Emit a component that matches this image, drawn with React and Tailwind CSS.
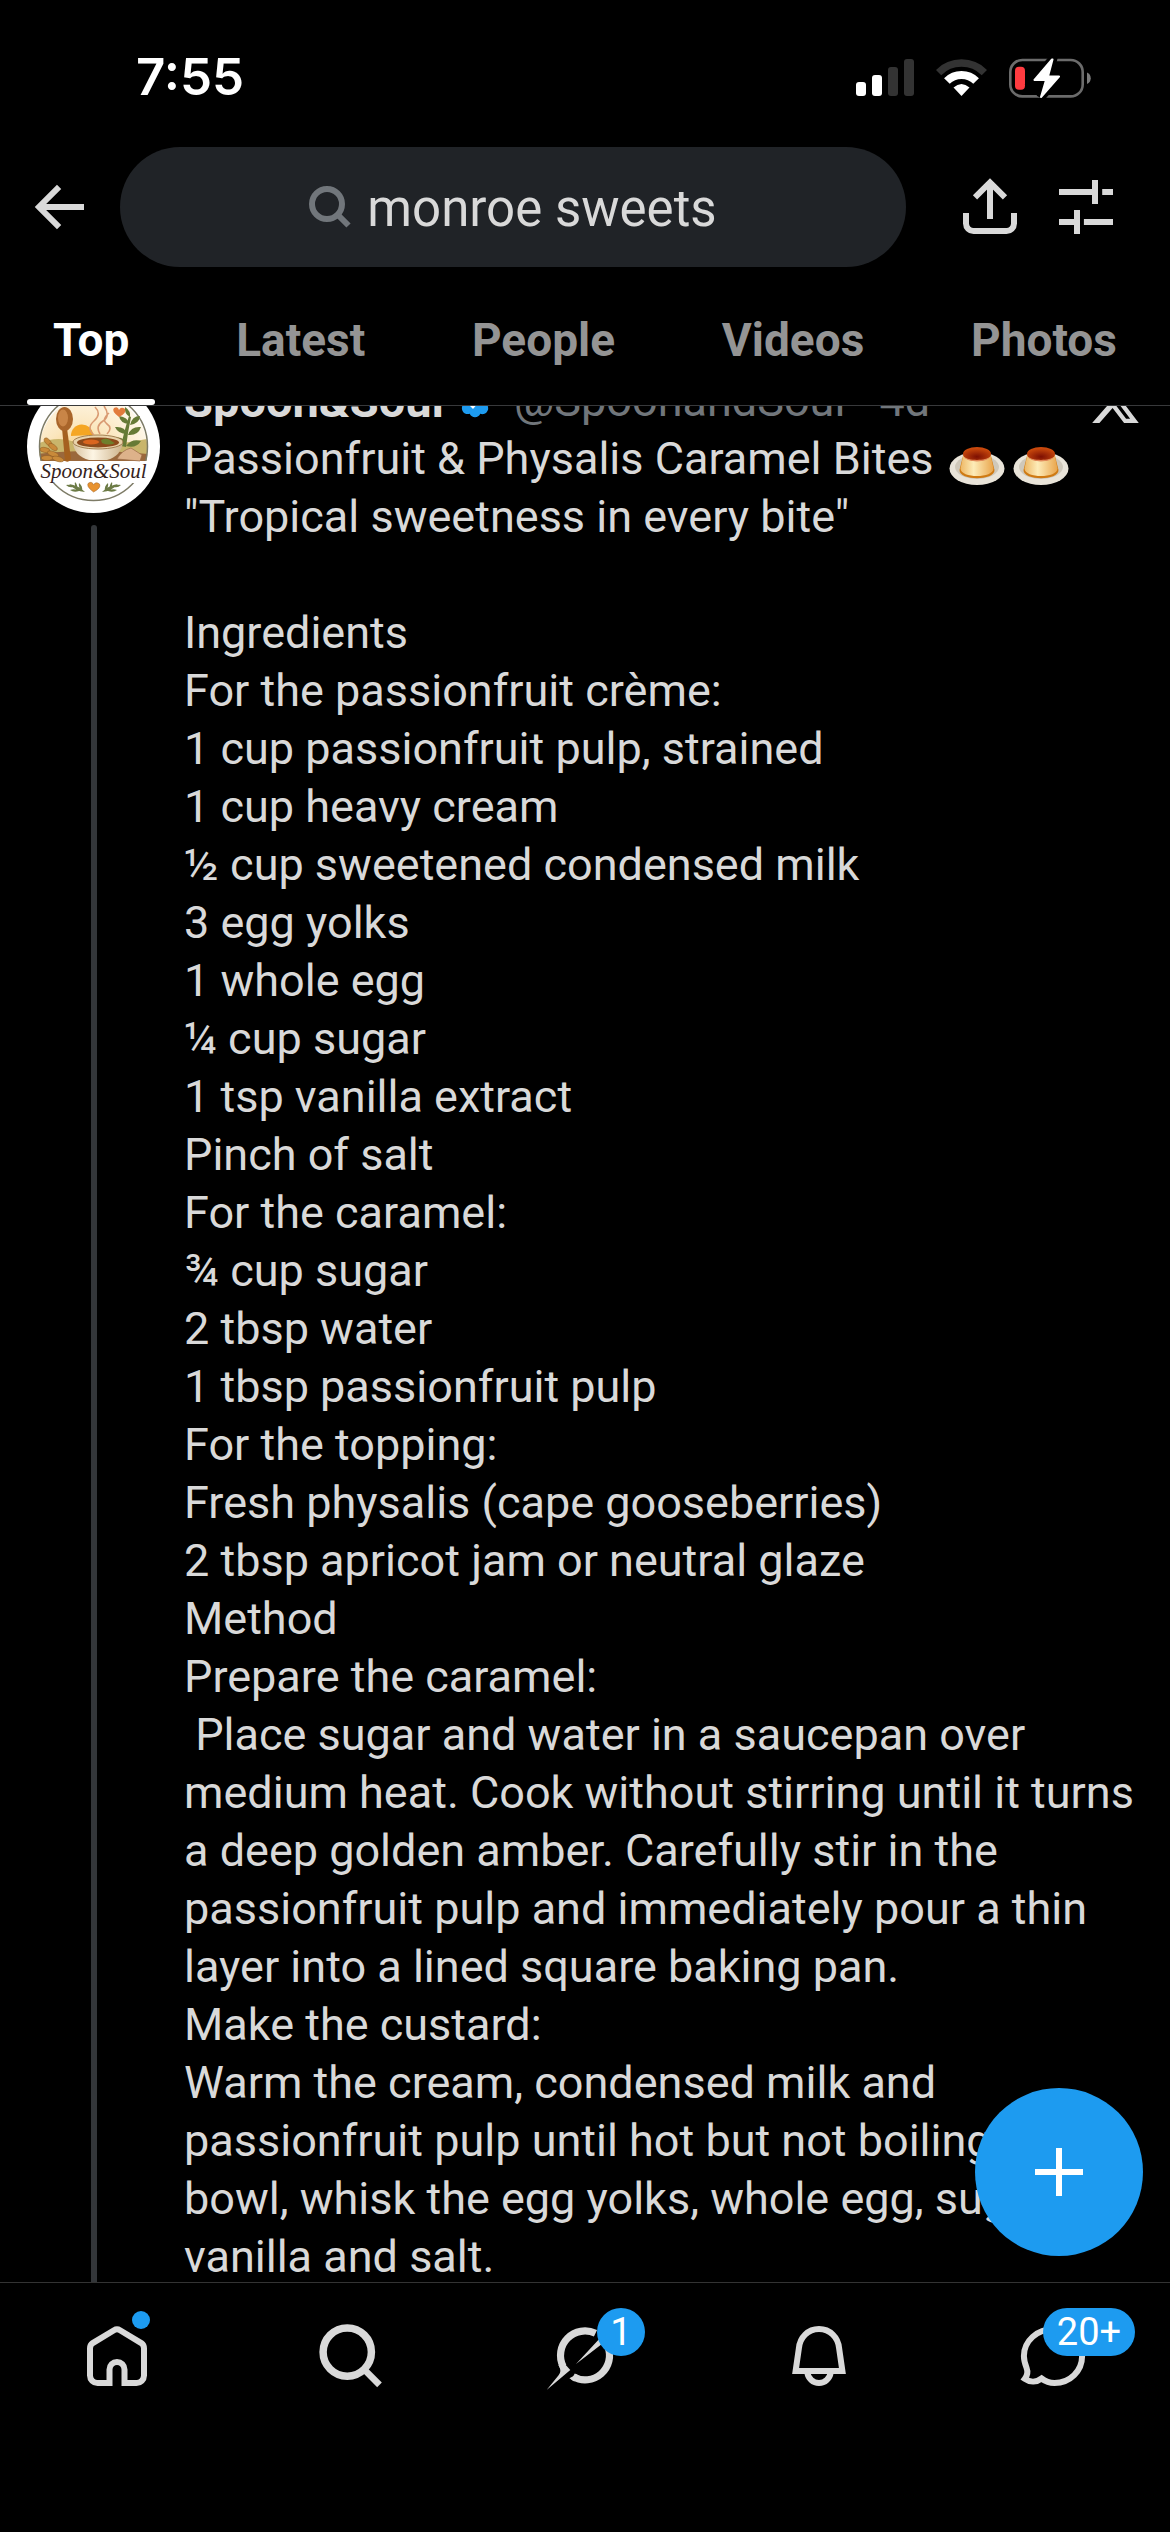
const TABS = ["Top", "Latest", "People", "Videos", "Photos"];

const POST_TEXT = `"Tropical sweetness in every bite"

Ingredients
For the passionfruit crème:
1 cup passionfruit pulp, strained
1 cup heavy cream
½ cup sweetened condensed milk
3 egg yolks
1 whole egg
¼ cup sugar
1 tsp vanilla extract
Pinch of salt
For the caramel:
¾ cup sugar
2 tbsp water
1 tbsp passionfruit pulp
For the topping:
Fresh physalis (cape gooseberries)
2 tbsp apricot jam or neutral glaze
Method
Prepare the caramel:
 Place sugar and water in a saucepan over medium heat. Cook without stirring until it turns a deep golden amber. Carefully stir in the passionfruit pulp and immediately pour a thin layer into a lined square baking pan.
Make the custard:
Warm the cream, condensed milk and passionfruit pulp until hot but not boiling. In a bowl, whisk the egg yolks, whole egg, sugar, vanilla and salt.`;

const Icon = ({ children, className = "size-[72px]" }) => (
  <svg
    viewBox="0 0 24 24"
    fill="none"
    stroke="currentColor"
    strokeWidth="2"
    overflow="visible"
    aria-hidden="true"
    className={className}
  >
    {children}
  </svg>
);

const BackIcon = () => (
  <Icon>
    <path d="M20 12H5M11.7 5.3L5 12l6.7 6.7" />
  </Icon>
);

const ShareIcon = () => (
  <Icon>
    <path d="M12 16V4M7 8.8l5-5 5 5M4 14v3.5A2.5 2.5 0 006.5 20h11a2.5 2.5 0 002.5-2.5V14" />
  </Icon>
);

const FilterIcon = () => (
  <Icon>
    <path d="M3 7h11M15 3v8M17.4 7H21M3 17h5M9 13v8M11.3 17H21" />
  </Icon>
);

const HomeIcon = () => (
  <Icon>
    <path d="M9.5 21v-4.5a2.5 2.5 0 015 0V21h4a2.5 2.5 0 002.5-2.5V9.5q0-1.2-.9-1.8L13 3.4q-1-.6-2 0L3.9 7.7Q3 8.3 3 9.5v9A2.5 2.5 0 005.5 21z" />
    <path d="M11.4 21h1.2" stroke="#000" strokeWidth="2.2" />
  </Icon>
);

const SearchIcon = () => (
  <Icon>
    <circle cx="10.75" cy="10.7" r="8.05" strokeWidth="2.5" />
    <path d="M16.4 16.5l5.1 5.1" strokeWidth="2.2" />
  </Icon>
);

const GrokIcon = () => (
  <Icon>
    <path d="M15.5 4.45A8.15 8.15 0 004.7 15.45" strokeWidth="2.4" />
    <path d="M8 18.9A8.15 8.15 0 0019.6 8.8" strokeWidth="2.4" />
    <path
      d="M3.1 15c.9 1.5.9 2.4.1 3.4L-.8 23.3l7.9-6.6-1.8-2zM6.8 19.4l2.6-1.4-1 2.5zM9 14.7l8.5-9.2 1 1.8z"
      fill="currentColor"
      stroke="none"
    />
  </Icon>
);

const BellIcon = () => (
  <Icon>
    <path d="M12 3C8.3 3 5.6 5.8 5.3 9.4L4.2 17h15.6l-1.1-7.6C18.4 5.8 15.7 3 12 3z" />
    <path d="M8.1 17.5c.3 2 1.9 3.5 3.9 3.5s3.6-1.5 3.9-3.5" />
  </Icon>
);

const ChatIcon = () => (
  <Icon>
    <path d="M12.3 3C6.7 3 2.3 7 2.3 12c0 1.6.5 2.9.9 4 .6 1.6.2 2.6-.6 3.6 1.8 1.3 4 1.1 5.6-.1 1.3 1 2.7 1.5 4.3 1.5 5.2 0 9.2-4 9.2-9s-4-9-9.4-9z" />
  </Icon>
);

const NAV_ITEMS = [
  { label: "Home", icon: HomeIcon, dot: true },
  { label: "Search", icon: SearchIcon },
  { label: "Grok", icon: GrokIcon, badge: "1", badgeClass: "left-12 w-12" },
  { label: "Notifications", icon: BellIcon },
  { label: "Messages", icon: ChatIcon, badge: "20+", badgeClass: "left-[26px] w-[92px]" },
];

const StatusBar = () => (
  <div className="flex h-[147px] items-center pl-[136px] pr-[79px] pt-2 text-white">
    <time className="font-['Inter',sans-serif] text-[51px] font-semibold">7:55</time>
    <div className="ml-auto flex items-center gap-[22px]">
      <svg viewBox="0 0 58 37" fill="#fff" className="h-[37px] w-[58px]" aria-hidden="true">
        <rect x="0" y="23" width="10" height="14" rx="3" />
        <rect x="16" y="16" width="10" height="21" rx="3" />
        <rect x="32" y="8" width="10" height="29" rx="3" fill="#333" />
        <rect x="48" y="0" width="10" height="37" rx="3" fill="#333" />
      </svg>
      <svg viewBox="0 0 51 37" fill="none" className="h-[37px] w-[51px]" aria-hidden="true">
        <path d="M2.6 13.6a32.4 32.4 0 0145.8 0" stroke="#333" strokeWidth="7.5" />
        <path d="M10.9 22a20.6 20.6 0 0129.2 0" stroke="#fff" strokeWidth="8" />
        <path d="M17.5 28.6q8-7 16 0L25.5 37z" fill="#fff" />
      </svg>
      <svg viewBox="0 0 82 40" fill="none" className="h-10 w-[82px]" aria-hidden="true">
        <rect x="1.3" y="2" width="72.4" height="36.4" rx="12" stroke="#6b6b6b" strokeWidth="2.6" />
        <path d="M78 14.5c5 2 5 9.5 0 11.5z" fill="#7b7b7b" />
        <rect x="6" y="8.7" width="10" height="23" rx="4" fill="#ff3b40" />
        <path d="M43 2L25.5 22H37l-5 17L50 18.5H39.5L43.5 2z" stroke="#000" strokeWidth="9" />
        <path
          d="M43 1.5L25.5 22H37l-5 17L50 18.5H39L43.5 1.5z"
          fill="#fff"
          stroke="#fff"
          strokeWidth="2"
          strokeLinejoin="round"
        />
      </svg>
    </div>
  </div>
);

const SearchHeader = () => (
  <div className="flex items-center pl-6 pr-12">
    <button type="button" aria-label="Back">
      <BackIcon />
    </button>
    <label className="ml-6 mr-12 flex h-[120px] min-w-0 flex-1 items-center justify-center gap-4 rounded-full bg-[#202327]">
      <svg
        viewBox="0 0 42 42"
        fill="none"
        stroke="#71767b"
        strokeWidth="6"
        className="size-[42px]"
        aria-hidden="true"
      >
        <circle cx="18" cy="18" r="15" />
        <path d="M28.5 28.5L39.5 39.5" />
      </svg>
      <input
        type="text"
        aria-label="Search"
        defaultValue="monroe sweets"
        className="field-sizing-content min-w-0 bg-transparent pt-1 text-[51px] outline-none"
      />
    </label>
    <div className="flex gap-6">
      <button type="button" aria-label="Share">
        <ShareIcon />
      </button>
      <button type="button" aria-label="Filters">
        <FilterIcon />
      </button>
    </div>
  </div>
);

const Tabs = () => (
  <nav className="flex h-[139px] justify-between border-b border-[#38393b] px-[27px]">
    {TABS.map((tab) => (
      <a
        key={tab}
        href={`#${tab.toLowerCase()}`}
        className={
          tab === "Top"
            ? "relative flex items-center px-[26px] pt-2 text-[46px] font-bold text-white"
            : "flex items-center px-[26px] pt-2 text-[46px] font-bold text-[#949494]"
        }
      >
        {tab}
        {tab === "Top" && (
          <span className="absolute inset-x-0 bottom-0 h-1.5 rounded-full bg-white" />
        )}
      </a>
    ))}
  </nav>
);

const Avatar = () => (
  <svg viewBox="0 0 133 133" className="size-[133px] shrink-0" role="img" aria-label="Spoon&Soul">
    <defs>
      <clipPath id="scene">
        <path d="M14 82a54 54 0 1 1 105 0z" />
      </clipPath>
      <radialGradient id="sun" cx="0.4" cy="0.65" r="0.6">
        <stop offset="0" stopColor="#f8c15c" />
        <stop offset="0.5" stopColor="#fbe6bd" />
        <stop offset="1" stopColor="#fffaf0" />
      </radialGradient>
      <linearGradient id="bowl" x1="0" x2="1">
        <stop offset="0" stopColor="#d9c3a0" />
        <stop offset="0.4" stopColor="#fdf5e4" />
        <stop offset="1" stopColor="#cdb28a" />
      </linearGradient>
    </defs>
    <circle cx="66.5" cy="66.5" r="66.5" fill="#fff" />
    <g clipPath="url(#scene)">
      <rect width="133" height="133" fill="url(#sun)" />
      <path d="M10 64q20-9 38-2t72-3v24H10z" fill="#c9b56b" />
      <path d="M10 74q50-6 112 0v10H10z" fill="#9a683c" />
      <path d="M44 56a11 11 0 0122-1z" fill="#f5a623" />
    </g>
    <circle cx="66.5" cy="66.5" r="54" fill="none" stroke="#7d7b66" strokeWidth="1.5" />
    <path d="M11 81h111l-3 22H14z" fill="#fff" />
    {/* wheat */}
    <g fill="#c98a3a" stroke="#8d5a20" strokeWidth="0.5">
      <ellipse cx="21" cy="62" rx="5" ry="2.5" transform="rotate(50 21 62)" />
      <ellipse cx="26" cy="67" rx="5" ry="2.5" transform="rotate(35 26 67)" />
      <ellipse cx="18" cy="70" rx="5" ry="2.5" transform="rotate(10 18 70)" />
      <ellipse cx="26" cy="74" rx="6" ry="2.5" transform="rotate(20 26 74)" />
      <ellipse cx="20" cy="78" rx="6" ry="2.5" />
      <ellipse cx="31" cy="79" rx="6" ry="2.5" transform="rotate(15 31 79)" />
    </g>
    {/* wooden spoon */}
    <path d="M35 48h5l4 31q-2 4-6 2z" fill="#a5611f" />
    <ellipse cx="37.5" cy="39" rx="8.5" ry="12" fill="#a9652a" />
    <ellipse cx="36" cy="38" rx="5" ry="8.5" fill="#c98547" />
    {/* herbs */}
    <g fill="#667a35">
      <path d="M94 66q4-18 8-30l2 1q-3 14-5 30z" />
      <path d="M103 37q-6-3-5-10 6 4 5 10zM102 44q-9-1-10-8 9 1 10 8zM103 45q2-9 10-9-1 8-10 9zM100 54q-9 0-12-7 10-1 12 7zM101 55q3-9 13-8-3 9-13 8zM98 64q-7 0-10-6 9-2 10 6zM99 66q6-8 15-5-5 8-15 5z" />
    </g>
    {/* soup bowl */}
    <path d="M46 62c0 9 7 16 16 18h18c9-2 15-9 16-18z" fill="url(#bowl)" />
    <ellipse cx="71" cy="62" rx="25" ry="7" fill="#e9d3ab" stroke="#8f6838" strokeWidth="0.8" />
    <ellipse cx="71" cy="62.5" rx="21" ry="5" fill="#8d4a1b" />
    <ellipse cx="64" cy="62" rx="8" ry="2.5" fill="#d9651f" />
    <path d="M74 60q5-3 9 0t5 3q-6 3-13 0z" fill="#6f7f2c" />
    <path
      d="M67 55q-8-7 0-14t1-14M73 54q-5-8 3-13t1-15M80 54q6-6 0-10t2-11"
      fill="none"
      stroke="#d99a72"
      strokeWidth="1.6"
    />
    <path d="M90 79q5-9 14-11l11 7-2 6z" fill="#ddb28a" stroke="#9b6c48" strokeWidth="0.7" />
    {/* hearts */}
    <path d="M92 37q-8-6-5-9 4-2 5 2 2-4 6-1 2 4-6 8z" fill="#e27b3c" />
    <path d="M66.5 112q-8-6-5-9 4-2 5 2 2-4 6-1 2 4-6 8z" fill="#e8922f" stroke="#9c5f20" strokeWidth="0.5" />
    <text
      x="66.5"
      y="98"
      textAnchor="middle"
      fill="#35231c"
      className="font-['Liberation_Serif',serif] text-[21px] italic"
    >
      Spoon&amp;Soul
    </text>
    <g fill="#6c7b46">
      <path d="M58 112q-10-1-16-8 9 1 16 8zM55 111q-4-4-3-8 4 3 3 8zM50 109q-3-4-2-7 3 3 2 7zM52 111q-5 2-9-1 5-2 9 1zM46 107q-4 1-7-2 4-1 7 2z" />
      <path d="M75 112q10-1 16-8-9 1-16 8zM78 111q4-4 3-8-4 3-3 8zM83 109q3-4 2-7-3 3-2 7zM81 111q5 2 9-1-5-2-9 1zM87 107q4 1 7-2-4-1-7 2z" />
    </g>
  </svg>
);

const VerifiedBadge = () => (
  <svg viewBox="0 0 22 22" className="size-[38px] shrink-0" role="img" aria-label="Verified">
    <path
      fill="#1d9bf0"
      d="M20.396 11c-.018-.646-.215-1.275-.57-1.816-.354-.54-.852-.972-1.438-1.246.223-.607.27-1.264.14-1.897-.131-.634-.437-1.218-.882-1.687-.47-.445-1.053-.75-1.687-.882-.633-.13-1.29-.083-1.897.14-.273-.587-.704-1.086-1.245-1.44S11.647 1.62 11 1.604c-.646.017-1.273.213-1.813.568s-.969.854-1.24 1.44c-.608-.223-1.267-.272-1.902-.14-.635.13-1.22.436-1.69.882-.445.47-.749 1.055-.878 1.688-.13.633-.08 1.29.144 1.896-.587.274-1.087.705-1.443 1.245-.356.54-.555 1.17-.574 1.817.02.647.218 1.276.574 1.817.356.54.856.972 1.443 1.245-.224.606-.274 1.263-.144 1.896.13.634.433 1.218.877 1.688.47.443 1.054.747 1.687.878.633.132 1.29.084 1.897-.136.274.586.705 1.084 1.246 1.439.54.354 1.17.551 1.816.569.647-.016 1.276-.213 1.817-.567s.972-.854 1.245-1.44c.604.239 1.266.296 1.903.164.636-.132 1.22-.447 1.68-.907.46-.46.776-1.044.908-1.681s.075-1.299-.165-1.903c.586-.274 1.084-.705 1.439-1.246.354-.54.551-1.17.569-1.816z"
    />
    <path fill="none" stroke="#fff" strokeWidth="1.8" d="M6.8 11.3l3 3 5.2-6" />
  </svg>
);

const XLogo = () => (
  <svg viewBox="1.25 2.25 21.6 19.5" fill="currentColor" className="h-[43px] w-12" aria-hidden="true">
    <path d="M18.244 2.25h3.308l-7.227 8.26 8.502 11.24H16.17l-5.214-6.817L4.99 21.75H1.68l7.73-8.835L1.254 2.25H8.08l4.713 6.231zm-1.161 17.52h1.833L7.084 4.126H5.117z" />
  </svg>
);

const Custard = () => (
  <svg viewBox="0 0 56 40" className="h-10 w-14" role="img" aria-label="custard">
    <defs>
      <linearGradient id="custard" x1="0" x2="1">
        <stop offset="0" stopColor="#eeb866" />
        <stop offset="0.4" stopColor="#fdecb8" />
        <stop offset="1" stopColor="#e9a54c" />
      </linearGradient>
      <radialGradient id="caramel" cx="0.5" cy="0.7" r="0.6">
        <stop offset="0" stopColor="#7d0f02" />
        <stop offset="1" stopColor="#c8480c" />
      </radialGradient>
    </defs>
    <ellipse cx="28" cy="22.5" rx="27.5" ry="16.5" fill="#e9e4d9" />
    <ellipse cx="28" cy="21" rx="22" ry="12" fill="#cfc8ba" />
    <path d="M14.5 8L10.5 24c-.5 11 35.5 11 35 0L41.5 8z" fill="#cf7a12" />
    <path d="M14.5 8L11.5 22.5c0 10 33 10 33 0L41.5 8z" fill="url(#custard)" />
    <ellipse cx="28" cy="8" rx="14" ry="7" fill="url(#caramel)" />
    <path d="M14.5 10.5c4 6.5 23 6.5 27 0-4 4.5-23 4.5-27 0z" fill="#e2895a" />
  </svg>
);

const Post = () => (
  <article className="-mt-[34px] flex min-h-full flex-1 gap-6 px-[27px]">
    <div className="flex shrink-0 flex-col items-center gap-3 pt-2">
      <Avatar />
      <div className="w-1.5 flex-1 rounded-t-full bg-[#333639]" />
    </div>
    <div className="min-w-0 flex-1 text-[45px] leading-[58px]">
      <div className="flex h-[58px] items-center">
        <span className="text-[47px] font-bold">Spoon&Soul</span>
        <span className="ml-3 mr-5 flex">
          <VerifiedBadge />
        </span>
        <span className="text-[#71767b]">@SpoonandSoul · 4d</span>
        <span className="ml-auto mr-1">
          <XLogo />
        </span>
      </div>
      <p className="whitespace-pre-wrap">
        Passionfruit & Physalis Caramel Bites{" "}
        <span className="ml-1 inline-flex gap-2 pt-2 align-middle">
          <Custard />
          <Custard />
        </span>
        {"\n"}
        {POST_TEXT}
      </p>
    </div>
  </article>
);

const BottomNav = () => (
  <nav className="grid h-[250px] shrink-0 grid-cols-5 items-start justify-items-center border-t border-[#333] pt-[37px]">
    {NAV_ITEMS.map(({ label, icon: NavIcon, dot, badge, badgeClass }) => (
      <a key={label} href={`#${label.toLowerCase()}`} aria-label={label} className="relative">
        <NavIcon />
        {dot && <span className="absolute -top-[9px] left-[51px] size-[18px] rounded-full bg-[#1d9bf0]" />}
        {badge && (
          <span
            className={`absolute -top-3 flex h-12 items-center justify-center rounded-full bg-[#1d9bf0] text-[38px] text-white ${badgeClass}`}
          >
            {badge}
          </span>
        )}
      </a>
    ))}
  </nav>
);

const App = () => {
  return (
    <div className="flex h-screen flex-col bg-black font-['Roboto',sans-serif] text-[#d9d9d9]">
      <header className="shrink-0">
        <StatusBar />
        <SearchHeader />
        <Tabs />
      </header>
      <main className="relative flex min-h-0 flex-1 items-stretch overflow-hidden">
        <Post />
        <button
          type="button"
          aria-label="New post"
          className="absolute bottom-[26px] right-[27px] flex size-[168px] items-center justify-center rounded-full bg-[#1d9bf0] text-white"
        >
          <svg viewBox="0 0 48 48" stroke="currentColor" strokeWidth="6" className="size-12" aria-hidden="true">
            <path d="M24 0v48M0 24h48" />
          </svg>
        </button>
      </main>
      <BottomNav />
    </div>
  );
};

export default App;
